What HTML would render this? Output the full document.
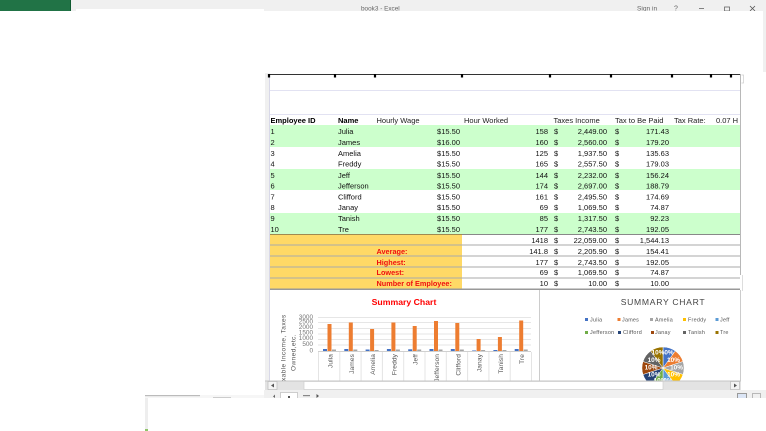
<!DOCTYPE html>
<html><head><meta charset="utf-8"><style>
html,body{margin:0;padding:0;background:#fff;width:766px;height:431px;overflow:hidden}
svg{position:absolute;left:0;top:0;display:block}
text{font-family:"Liberation Sans",sans-serif;font-size:7.5px;fill:#111}
.b{font-weight:bold;fill:#000}
.h{fill:#222}
.r{font-weight:bold;fill:#f01010;font-size:7.3px}
.e{text-anchor:end}
.t{font-size:7px;fill:#666}
.l{font-size:5.4px;fill:#555;letter-spacing:.25px}
.a{font-size:6.6px;fill:#555;letter-spacing:.1px}
.c{font-size:6.6px;fill:#555;letter-spacing:.1px;text-anchor:end}
.y{font-size:6.4px;fill:#777;text-anchor:end}
.p{font-size:6.4px;font-weight:bold;fill:#fff;text-anchor:middle}
.bl{filter:blur(.3px)}
</style></head><body>
<svg width="766" height="431" viewBox="0 0 766 431" xmlns="http://www.w3.org/2000/svg">
<defs><clipPath id="c"><rect x="265" y="290" width="476" height="91"/></clipPath>
<clipPath id="tb"><rect x="0" y="0" width="766" height="11"/></clipPath></defs>
<rect width="766" height="431" fill="#fff"/>
<!-- title bar -->
<rect width="766" height="11" fill="#f0f0f0"/>
<rect width="70" height="11" fill="#217346"/>
<rect x="70" width="1" height="11" fill="#0f5a30"/>
<rect x="76" y="9" width="188" height="3" fill="#fff"/>
<rect x="763" y="11" width="3" height="61" fill="#f0f0f0"/>
<g clip-path="url(#tb)" class="bl">
<text x="361" y="10.5" class="t" style="font-size:6.4px">book3  -  Excel</text>
<text x="637" y="10.5" class="t" style="font-size:6.6px">Sign in</text>
<text x="674" y="10.5" class="t">?</text>
<rect x="699" y="8" width="5" height=".8" fill="#666"/>
<rect x="724.500" y="7" width="5" height="4" fill="none" stroke="#666" stroke-width=".8"/>
<path d="M750 6l5 5M755 6l-5 5" stroke="#555" stroke-width=".8"/>
</g>
<!-- sheet background -->
<rect x="265" y="73" width="5" height="308" fill="#f0f0f0"/>
<rect x="269" y="74" width="1" height="307" fill="#d8d8e8"/>
<rect x="270" y="90" width="470" height="1" fill="#e2e2f2"/>
<rect x="270" y="114" width="470" height="1" fill="#e2e2f2"/>
<rect x="269" y="74" width="472" height="1" fill="#333"/>
<rect x="740" y="74" width="1" height="201" fill="#b8b8b8"/>
<rect x="742" y="275" width="1" height="16" fill="#ddd"/>
<path d="M269 74v3.500M335 74v3.500M375 74v3.500M462 74v3.500M550 74v3.500M611 74v3.500M672 74v3.500M711 74v3.500M731 74v3.500" stroke="#000" stroke-width="2.200"/>
<path d="M741.500 75h2v8h-2" fill="none" stroke="#ccc" stroke-width=".7"/>
<!-- bands -->
<rect x="270" y="125" width="470" height="22" fill="#ccffcc"/>
<rect x="270" y="169" width="470" height="21" fill="#ccffcc"/>
<rect x="270" y="213" width="470" height="21" fill="#ccffcc"/>
<rect x="270" y="234" width="192" height="55" fill="#ffd966"/>
<rect x="270" y="234" width="192" height="1" fill="#a08a50"/>
<rect x="462" y="234" width="278" height="1" fill="#888"/>
<path d="M270 245h470M270 256h470M270 267h470M270 278h470" stroke="#aaa" stroke-width="1"/>
<rect x="270" y="288.500" width="470" height="1.500" fill="#999"/>
<g class="bl">
<!-- header -->
<text x="270.500" y="123" class="b">Employee ID</text>
<text x="338" y="123" class="b">Name</text>
<text x="376.500" y="123" class="h">Hourly Wage</text>
<text x="464" y="123" class="h">Hour Worked</text>
<text x="553.500" y="123" class="h">Taxes Income</text>
<text x="615" y="123" class="h">Tax to Be Paid</text>
<text x="674" y="123" class="h">Tax Rate:</text>
<text x="716" y="123" class="h">0.07 H</text>
<!-- rows -->
<g id="rows">
<text x="270.500" y="134">1</text><text x="338" y="134">Julia</text><text x="460" y="134" class="e">$15.50</text><text x="548" y="134" class="e">158</text><text x="554" y="134">$</text><text x="607" y="134" class="e">2,449.00</text><text x="615" y="134">$</text><text x="669" y="134" class="e">171.43</text>
<text x="270.500" y="145">2</text><text x="338" y="145">James</text><text x="460" y="145" class="e">$16.00</text><text x="548" y="145" class="e">160</text><text x="554" y="145">$</text><text x="607" y="145" class="e">2,560.00</text><text x="615" y="145">$</text><text x="669" y="145" class="e">179.20</text>
<text x="270.500" y="156">3</text><text x="338" y="156">Amelia</text><text x="460" y="156" class="e">$15.50</text><text x="548" y="156" class="e">125</text><text x="554" y="156">$</text><text x="607" y="156" class="e">1,937.50</text><text x="615" y="156">$</text><text x="669" y="156" class="e">135.63</text>
<text x="270.500" y="166.500">4</text><text x="338" y="166.500">Freddy</text><text x="460" y="166.500" class="e">$15.50</text><text x="548" y="166.500" class="e">165</text><text x="554" y="166.500">$</text><text x="607" y="166.500" class="e">2,557.50</text><text x="615" y="166.500">$</text><text x="669" y="166.500" class="e">179.03</text>
<text x="270.500" y="178">5</text><text x="338" y="178">Jeff</text><text x="460" y="178" class="e">$15.50</text><text x="548" y="178" class="e">144</text><text x="554" y="178">$</text><text x="607" y="178" class="e">2,232.00</text><text x="615" y="178">$</text><text x="669" y="178" class="e">156.24</text>
<text x="270.500" y="188.500">6</text><text x="338" y="188.500">Jefferson</text><text x="460" y="188.500" class="e">$15.50</text><text x="548" y="188.500" class="e">174</text><text x="554" y="188.500">$</text><text x="607" y="188.500" class="e">2,697.00</text><text x="615" y="188.500">$</text><text x="669" y="188.500" class="e">188.79</text>
<text x="270.500" y="199.500">7</text><text x="338" y="199.500">Clifford</text><text x="460" y="199.500" class="e">$15.50</text><text x="548" y="199.500" class="e">161</text><text x="554" y="199.500">$</text><text x="607" y="199.500" class="e">2,495.50</text><text x="615" y="199.500">$</text><text x="669" y="199.500" class="e">174.69</text>
<text x="270.500" y="210">8</text><text x="338" y="210">Janay</text><text x="460" y="210" class="e">$15.50</text><text x="548" y="210" class="e">69</text><text x="554" y="210">$</text><text x="607" y="210" class="e">1,069.50</text><text x="615" y="210">$</text><text x="669" y="210" class="e">74.87</text>
<text x="270.500" y="221">9</text><text x="338" y="221">Tanish</text><text x="460" y="221" class="e">$15.50</text><text x="548" y="221" class="e">85</text><text x="554" y="221">$</text><text x="607" y="221" class="e">1,317.50</text><text x="615" y="221">$</text><text x="669" y="221" class="e">92.23</text>
<text x="270.500" y="232">10</text><text x="338" y="232">Tre</text><text x="460" y="232" class="e">$15.50</text><text x="548" y="232" class="e">177</text><text x="554" y="232">$</text><text x="607" y="232" class="e">2,743.50</text><text x="615" y="232">$</text><text x="669" y="232" class="e">192.05</text>
</g>
<!-- summary -->
<text x="548" y="243" class="e">1418</text><text x="554" y="243">$</text><text x="607" y="243" class="e">22,059.00</text><text x="615" y="243">$</text><text x="669" y="243" class="e">1,544.13</text>
<text x="376.500" y="254" class="r">Average:</text><text x="548" y="254" class="e">141.8</text><text x="554" y="254">$</text><text x="607" y="254" class="e">2,205.90</text><text x="615" y="254">$</text><text x="669" y="254" class="e">154.41</text>
<text x="376.500" y="265" class="r">Highest:</text><text x="548" y="265" class="e">177</text><text x="554" y="265">$</text><text x="607" y="265" class="e">2,743.50</text><text x="615" y="265">$</text><text x="669" y="265" class="e">192.05</text>
<text x="376.500" y="275" class="r">Lowest:</text><text x="548" y="275" class="e">69</text><text x="554" y="275">$</text><text x="607" y="275" class="e">1,069.50</text><text x="615" y="275">$</text><text x="669" y="275" class="e">74.87</text>
<text x="376.500" y="286" class="r">Number of Employee:</text><text x="548" y="286" class="e">10</text><text x="554" y="286">$</text><text x="607" y="286" class="e">10.00</text><text x="615" y="286">$</text><text x="669" y="286" class="e">10.00</text>
</g>
<!-- charts -->
<g clip-path="url(#c)">
<rect x="539" y="290" width="1" height="91" fill="#ccc"/>
<rect x="740" y="290" width="1" height="91" fill="#ccc"/>
<path d="M318 317.500h213M318 322.500h213M318 328.500h213M318 334h213M318 339.500h213M318 345h213" stroke="#e6e6e6" stroke-width="1"/>
<path d="M318 351.500h213" stroke="#d0d0d0"/>
<path d="M318.500 352v29M339.800 352v29M361.100 352v29M382.400 352v29M403.700 352v29M425 352v29M446.300 352v29M467.600 352v29M488.900 352v29M510.200 352v29M531.500 352v29" stroke="#e4e4e4"/>
<!-- bars orange -->
<g fill="#ed7d31">
<rect x="327.500" y="324" width="4" height="27"/>
<rect x="348.800" y="322.500" width="4" height="28.500"/>
<rect x="370.100" y="329" width="4" height="22"/>
<rect x="391.400" y="322.500" width="4" height="28.500"/>
<rect x="412.700" y="326" width="4" height="25"/>
<rect x="434" y="321" width="4" height="30"/>
<rect x="455.300" y="323" width="4" height="28"/>
<rect x="476.600" y="339" width="4" height="12"/>
<rect x="497.900" y="337" width="4" height="14"/>
<rect x="519.200" y="320.500" width="4" height="30.500"/>
</g>
<g fill="#4472c4">
<rect x="323" y="349" width="4" height="2"/><rect x="344.300" y="349" width="4" height="2"/><rect x="365.600" y="349.500" width="4" height="1.500"/><rect x="386.900" y="349" width="4" height="2"/><rect x="408.200" y="349.300" width="4" height="1.700"/><rect x="429.500" y="349" width="4" height="2"/><rect x="450.800" y="349" width="4" height="2"/><rect x="472.100" y="350" width="4" height="1" fill="#9db4e0"/><rect x="493.400" y="350" width="4" height="1"/><rect x="514.700" y="349" width="4" height="2"/>
</g>
<g fill="#a5a5a5">
<rect x="332" y="349.500" width="4" height="1.500"/><rect x="353.300" y="349.500" width="4" height="1.500"/><rect x="374.600" y="350" width="4" height="1"/><rect x="395.900" y="349.500" width="4" height="1.500"/><rect x="417.200" y="349.500" width="4" height="1.500"/><rect x="438.500" y="349.500" width="4" height="1.500"/><rect x="459.800" y="349.500" width="4" height="1.500"/><rect x="481.100" y="350" width="4" height="1"/><rect x="502.400" y="350" width="4" height="1"/><rect x="523.700" y="349.500" width="4" height="1.500"/>
</g>
<g class="bl">
<text x="404" y="305" text-anchor="middle" style="font-size:8.700px;font-weight:bold;fill:#f00">Summary Chart</text>
<text x="663" y="305" text-anchor="middle" style="font-size:8.600px;fill:#444;letter-spacing:.7px">SUMMARY CHART</text>
<!-- y ticks -->
<text x="313" y="319" class="y">3000</text>
<text x="313" y="323.500" class="y">2500</text>
<text x="313" y="329" class="y">2000</text>
<text x="313" y="334.500" class="y">1500</text>
<text x="313" y="340" class="y">1000</text>
<text x="313" y="346" class="y">500</text>
<text x="313" y="352.500" class="y">0</text>
<text transform="translate(285.500 381) rotate(-90)" class="a" style="letter-spacing:.35px">xable Income, Taxes</text>
<text transform="translate(295.500 371) rotate(-90)" class="a" style="letter-spacing:.35px">Owned,etc.</text>
<!-- cat labels -->
<text transform="translate(332.500 354) rotate(-90)" class="c">Julia</text>
<text transform="translate(353.800 354) rotate(-90)" class="c">James</text>
<text transform="translate(375.100 354) rotate(-90)" class="c">Amelia</text>
<text transform="translate(396.400 354) rotate(-90)" class="c">Freddy</text>
<text transform="translate(417.700 354) rotate(-90)" class="c">Jeff</text>
<text transform="translate(439 354) rotate(-90)" class="c">Jefferson</text>
<text transform="translate(460.300 354) rotate(-90)" class="c">Clifford</text>
<text transform="translate(481.600 354) rotate(-90)" class="c">Janay</text>
<text transform="translate(502.900 354) rotate(-90)" class="c">Tanish</text>
<text transform="translate(524.200 354) rotate(-90)" class="c">Tre</text>
<!-- legend -->
<rect x="585" y="318" width="3" height="3" fill="#4472c4"/><text x="590" y="321.500" class="l">Julia</text>
<rect x="617.500" y="318" width="3" height="3" fill="#ed7d31"/><text x="622" y="321.500" class="l">James</text>
<rect x="650" y="318" width="3" height="3" fill="#a5a5a5"/><text x="655" y="321.500" class="l">Amelia</text>
<rect x="683" y="318" width="3" height="3" fill="#ffc000"/><text x="688" y="321.500" class="l">Freddy</text>
<rect x="715.500" y="318" width="3" height="3" fill="#5b9bd5"/><text x="720" y="321.500" class="l">Jeff</text>
<rect x="585" y="331" width="3" height="3" fill="#70ad47"/><text x="590" y="334" class="l">Jefferson</text>
<rect x="618" y="331" width="3" height="3" fill="#264478"/><text x="623" y="334" class="l">Clifford</text>
<rect x="651" y="331" width="3" height="3" fill="#9e480e"/><text x="655" y="334" class="l">Janay</text>
<rect x="683" y="331" width="3" height="3" fill="#636363"/><text x="688" y="334" class="l">Tanish</text>
<rect x="715.500" y="331" width="3" height="3" fill="#997300"/><text x="720" y="334" class="l">Tre</text>
</g>
<!-- pie -->
<g stroke="#fff" stroke-width=".5">
<path d="M663 368V347A21 21 0 0 1 675.300 351Z" fill="#4472c4"/>
<path d="M663 368L675.300 351A21 21 0 0 1 683 361.500Z" fill="#ed7d31"/>
<path d="M663 368L683 361.500A21 21 0 0 1 683 374.500Z" fill="#a5a5a5"/>
<path d="M663 368L683 374.500A21 21 0 0 1 675.300 385Z" fill="#ffc000"/>
<path d="M663 368L675.300 385A21 21 0 0 1 663 389Z" fill="#5b9bd5"/>
<path d="M663 368V389A21 21 0 0 1 650.700 385Z" fill="#70ad47"/>
<path d="M663 368L650.700 385A21 21 0 0 1 643 374.500Z" fill="#264478"/>
<path d="M663 368L643 374.500A21 21 0 0 1 643 361.500Z" fill="#9e480e"/>
<path d="M663 368L643 361.500A21 21 0 0 1 650.700 351Z" fill="#636363"/>
<path d="M663 368L650.700 351A21 21 0 0 1 663 347Z" fill="#997300"/>
</g>
<g class="bl">
<text x="658" y="354.500" class="p">10%</text><text x="669" y="354.500" class="p">0%</text>
<text x="673.500" y="362" class="p">10%</text>
<text x="676.500" y="369.500" class="p">10%</text>
<text x="673.500" y="376.500" class="p">10%</text>
<text x="654" y="362" class="p">10%</text>
<text x="651" y="369.500" class="p">10%</text>
<text x="654" y="376.500" class="p">10%</text>
<text x="660" y="382.500" class="p">10%</text><text x="668" y="382.500" class="p">0%</text>
</g>
</g>
<!-- scrollbar -->
<rect x="265" y="381" width="476" height="9" fill="#e3e3e3"/>
<rect x="265" y="380.500" width="476" height="1" fill="#c4c4c4"/>
<rect x="304" y="381.500" width="359" height="8" fill="#fff" stroke="#cfcfcf" stroke-width=".7"/>
<rect x="268" y="381.500" width="9" height="8" fill="#f4f4f4" stroke="#bbb" stroke-width=".7"/>
<path d="M274 383.500v4l-3-2z" fill="#555"/>
<rect x="730.500" y="381.500" width="9" height="8" fill="#f4f4f4" stroke="#bbb" stroke-width=".7"/>
<path d="M734 383.500v4l3-2z" fill="#555"/>
<!-- bottom bar -->
<rect x="264" y="390" width="502" height="8" fill="#f0f0f0"/>
<rect x="145" y="395" width="119" height="3" fill="#f6f6f6"/>
<rect x="145" y="398" width="3" height="33" fill="#eeeeee"/>
<rect x="145" y="429" width="3" height="2" fill="#8fc46a"/>
<rect x="145" y="395" width="55" height="1.200" fill="#bbb"/>
<rect x="213" y="397" width="18" height="1" fill="#ccc"/>
<path d="M275 394.500l-2 2 2 1.500z" fill="#666"/>
<rect x="280.500" y="392.500" width="17" height="6" fill="#fff" stroke="#bbb" stroke-width=".7"/>
<rect x="288" y="396" width="2" height="2" fill="#555"/>
<rect x="303" y="395" width="7" height="1.200" fill="#888"/>
<path d="M316.500 394v4l2.500-2z" fill="#555"/>
<rect x="737.500" y="393.500" width="9" height="5" fill="#dbe5f5" stroke="#999" stroke-width="1"/>
<rect x="752.500" y="393.500" width="8" height="5" fill="none" stroke="#aaa" stroke-width=".8"/>
<!-- white below -->
<rect x="148" y="398" width="618" height="33" fill="#fff"/>
</svg>
</body></html>
